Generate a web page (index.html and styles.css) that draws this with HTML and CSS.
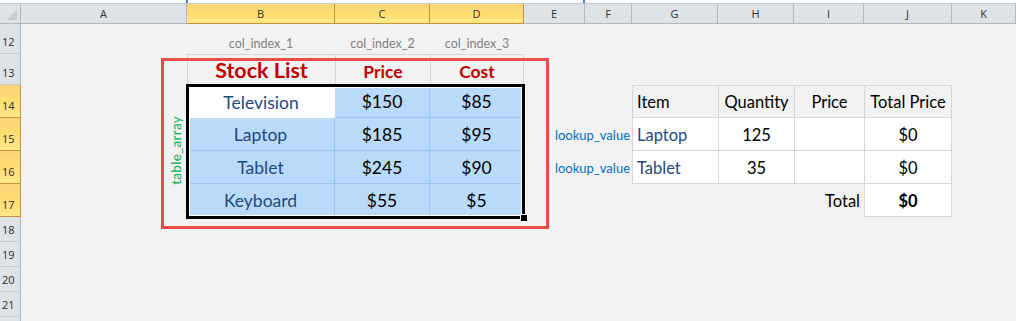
FILE: index.html
```html
<!DOCTYPE html>
<html lang="en">
<head>
  <meta charset="UTF-8" />
  <title>VLOOKUP - Stock List</title>
  <link rel="stylesheet" href="styles.css">
</head>
<body>

  <div class="sheet">
    <div class="strip"><span class="tick"></span><span class="tick"></span></div>

    <div class="row colhead">
      <div class="corner"><span class="tri"></span></div>
      <div class="ch">A</div>
      <div class="ch sel">B</div>
      <div class="ch sel">C</div>
      <div class="ch sel">D</div>
      <div class="ch">E</div>
      <div class="ch">F</div>
      <div class="ch">G</div>
      <div class="ch">H</div>
      <div class="ch">I</div>
      <div class="ch">J</div>
      <div class="ch">K</div>
    </div>

    <div class="row h30">
      <div class="rh">12</div>
      <div class="cell idx b">col_index_1</div>
      <div class="cell idx c">col_index_2</div>
      <div class="cell idx d">col_index_3</div>
    </div>

    <div class="row h31">
      <div class="rh">13</div>
      <div class="cell hd b title">Stock List</div>
      <div class="cell hd c">Price</div>
      <div class="cell hd d last">Cost</div>
    </div>

    <div class="row h33">
      <div class="rh sel">14</div>
      <div class="cell b item active">Television</div>
      <div class="cell c blue">$150</div>
      <div class="cell d blue">$85</div>
      <div class="cell g lt top head left">Item</div>
      <div class="cell h lt top head">Quantity</div>
      <div class="cell i lt top head">Price</div>
      <div class="cell j lt top head end">Total Price</div>
    </div>

    <div class="row h33">
      <div class="rh sel">15</div>
      <div class="cell b item blue">Laptop</div>
      <div class="cell c blue">$185</div>
      <div class="cell d blue">$95</div>
      <div class="cell ef lookup">lookup_value</div>
      <div class="cell g lt item left">Laptop</div>
      <div class="cell h lt">125</div>
      <div class="cell i lt"></div>
      <div class="cell j lt end">$0</div>
    </div>

    <div class="row h33">
      <div class="rh sel">16</div>
      <div class="cell b item blue">Tablet</div>
      <div class="cell c blue">$245</div>
      <div class="cell d blue">$90</div>
      <div class="cell ef lookup">lookup_value</div>
      <div class="cell g lt item left">Tablet</div>
      <div class="cell h lt">35</div>
      <div class="cell i lt"></div>
      <div class="cell j lt end">$0</div>
    </div>

    <div class="row h33">
      <div class="rh sel">17</div>
      <div class="cell b item blue">Keyboard</div>
      <div class="cell c blue">$55</div>
      <div class="cell d blue">$5</div>
      <div class="cell i lk right">Total</div>
      <div class="cell j lt end strong">$0</div>
    </div>

    <div class="row h25"><div class="rh">18</div></div>
    <div class="row h25"><div class="rh">19</div></div>
    <div class="row h25"><div class="rh">20</div></div>
    <div class="row h25"><div class="rh">21</div></div>
    <div class="row h25"><div class="rh"></div></div>

    <!-- overlays: selection, highlight box, text box -->
    <div class="selection"><span class="handle"></span></div>
    <div class="redbox"></div>
    <div class="array-label">table_array</div>
  </div>

</body>
</html>
```

FILE: styles.css
```css
:root {
--sheet-bg: #f2f2f2;
--head-bg: #dfe3e8;
--head-line: #b3b8bf;
--sel-line: #c8923a;
--sel-bg: linear-gradient(180deg, #f9d57a 0%, #ffdf72 55%, #ffe88a 100%);
--cell-line: #d6d6d6;
--blue-fill: #badafb;
--blue-line: #9fc4ea;
--dark-blue: #1f497d;
--dark-red: #c00000;
--cols: 21px 166px 148px 95px 94px 61px 47px 86px 76px 70px 88px 1fr;
}

* {
  box-sizing: border-box;
}

html, body {
  margin: 0;
  height: 100%;
  overflow: hidden;
}

body {
  background: var(--sheet-bg);
  font-family: "Lato", "Open Sans", sans-serif;
  color: #000;
}

.sheet {
  position: relative;
}

.strip {
  height: 4px;
  background: #fbfcfd;
  border-bottom: 1px solid #c3c8cf;
  display: flex;
  gap: 395px;
  padding-left: 186px;
}

.tick {
  width: 2px;
  height: 3px;
  background: #4f81bd;
}

.row {
  display: grid;
  grid-template-columns: var(--cols);
}

.row > * {
  grid-row: 1;
}

.h30 { height: 30px; }
.h31 { height: 31px; }
.h33 { height: 33px; }
.h25 { height: 25px; }

/* column headers */
.colhead {
  height: 20px;
}

.corner {
  background: var(--head-bg);
  border-right: 1px solid var(--head-line);
  border-bottom: 1px solid var(--head-line);
  position: relative;
}

.tri {
  position: absolute;
  right: 3px;
  bottom: 3px;
  width: 0;
  height: 0;
  border-left: 10px solid transparent;
  border-bottom: 10px solid #c5cad1;
}

.ch {
  background: var(--head-bg);
  border-right: 1px solid var(--head-line);
  border-bottom: 1px solid var(--head-line);
  font-family: "Open Sans", sans-serif;
  font-size: 11px;
  color: #2e2e2e;
  display: flex;
  align-items: center;
  justify-content: center;
}

.ch.sel {
  background: var(--sel-bg);
  border-color: var(--sel-line);
  border-bottom-color: var(--sel-line);
}

/* row headers */
.rh {
  grid-column: 1;
  background: var(--head-bg);
  border-right: 1px solid var(--head-line);
  border-bottom: 1px solid #c6cbd2;
  font-family: "Open Sans", sans-serif;
  font-size: 11px;
  color: #2e2e2e;
  display: flex;
  align-items: flex-end;
  padding: 0 0 4px 2px;
}

.rh.sel {
  background: var(--sel-bg);
  border-right-color: var(--sel-line);
  border-bottom-color: var(--sel-line);
}

/* cells */
.cell {
  display: flex;
  align-items: center;
  justify-content: center;
  font-size: 17.5px;
  white-space: nowrap;
  padding-top: 1px;
}

.b { grid-column: 3; }
.c { grid-column: 4; }
.d { grid-column: 5; }
.ef { grid-column: 6 / span 2; }
.g { grid-column: 8; }
.h { grid-column: 9; }
.i { grid-column: 10; }
.j { grid-column: 11; }

.idx {
  font-size: 12.5px;
  color: #808080;
  align-items: flex-end;
  padding: 0 0 3px;
}

.hd {
  border-top: 1px solid var(--cell-line);
  border-left: 1px solid var(--cell-line);
  color: var(--dark-red);
  font-weight: bold;
  font-size: 17.5px;
  padding-top: 3px;
}

.hd.last {
  border-right: 1px solid var(--cell-line);
}

.hd.title {
  font-size: 21.5px;
  padding-top: 0;
}

.item {
  color: var(--dark-blue);
}

.active {
  background: #fff;
}

.blue {
  background: var(--blue-fill);
  border-right: 1px solid var(--blue-line);
  border-bottom: 1px solid var(--blue-line);
}

.lookup {
  justify-content: flex-end;
  color: #0070c0;
  font-size: 13px;
  padding: 1px 2px 0 0;
}

/* lookup table */
.lt, .lk {
  font-size: 16.5px;
}

.lt {
  background: #fff;
  border-left: 1px solid var(--cell-line);
  border-bottom: 1px solid var(--cell-line);
}

.lt.top {
  border-top: 1px solid var(--cell-line);
}

.lt.end {
  border-right: 1px solid var(--cell-line);
}

.lt.head {
  background: var(--sheet-bg);
}

.left {
  justify-content: flex-start;
  padding-left: 4px;
}

.right {
  justify-content: flex-end;
  padding-right: 4px;
}

.strong {
  font-weight: bold;
}

/* overlays */
.selection {
  position: absolute;
  left: 186px;
  top: 84px;
  width: 339px;
  height: 135px;
  border: 3px solid #000;
  box-shadow: inset 0 0 0 1px #fff;
}

.handle {
  position: absolute;
  right: -5px;
  bottom: -5px;
  width: 6px;
  height: 6px;
  background: #000;
  outline: 1px solid #fff;
}

.redbox {
  position: absolute;
  left: 161px;
  top: 58px;
  width: 388px;
  height: 171px;
  border: 3px solid #e94b45;
}

.array-label {
  position: absolute;
  left: 168px;
  top: 116px;
  writing-mode: vertical-rl;
  transform: rotate(180deg);
  color: #00b050;
  font-size: 13.5px;
  letter-spacing: 0.3px;
}
```
